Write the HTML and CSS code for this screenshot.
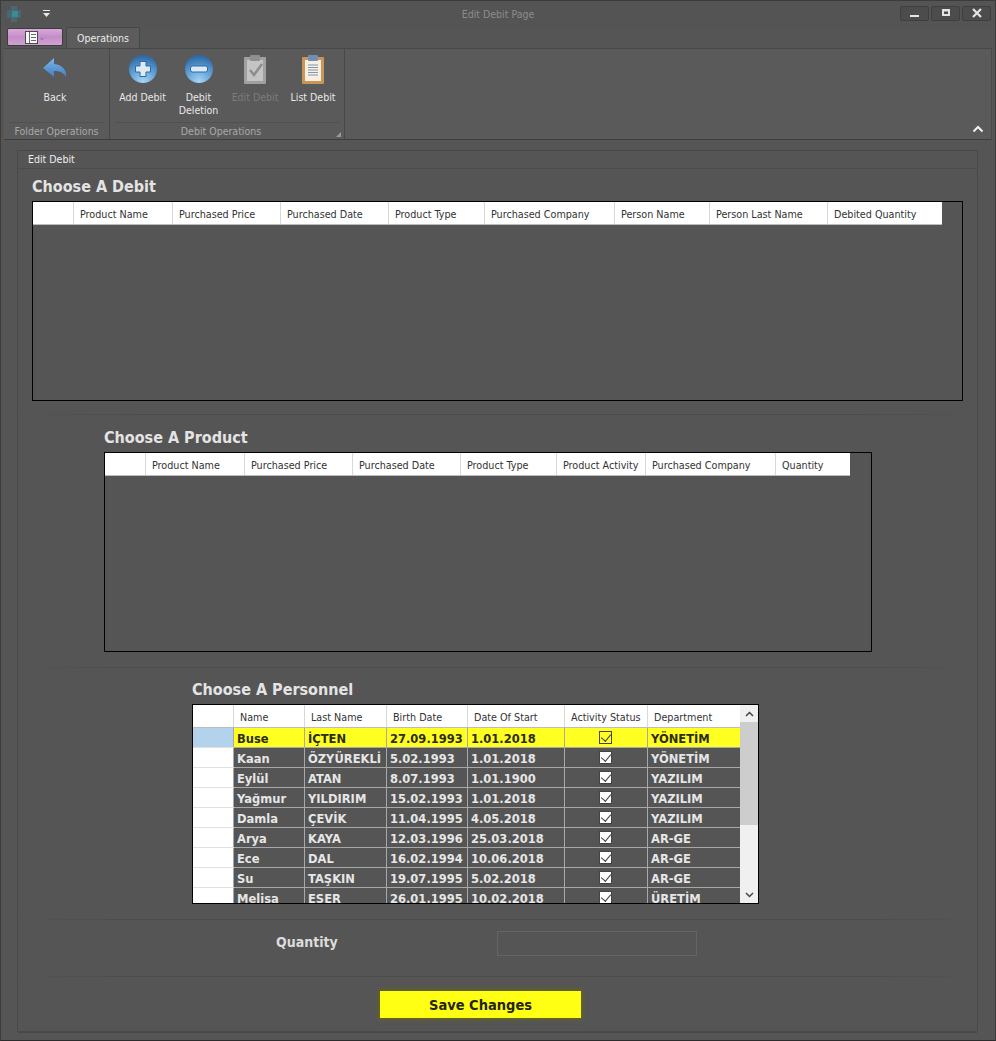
FILE: index.html
```html
<!DOCTYPE html>
<html lang="en">
<head>
    <meta charset="UTF-8">
    <title>Edit Debit Page</title>
    <link rel="stylesheet" href="styles.css">
</head>
<body>
<div class="window">

    <div class="titlebar">
        <div class="quick">
            <svg class="appicon" width="16" height="18" viewBox="0 0 16 18">
                <rect x="5" y="1" width="6" height="16" fill="#4f6670"/>
                <rect x="1" y="5" width="14" height="8" fill="#466873"/>
                <rect x="6" y="6" width="6" height="6" fill="#3a8d97"/>
            </svg>
            <svg class="qat" width="9" height="8" viewBox="0 0 9 8">
                <rect x="1" y="0" width="7" height="1" fill="#e8e8e8"/>
                <path d="M1 3h7L4.5 7z" fill="#e8e8e8"/>
            </svg>
        </div>
        <div class="wintitle">Edit Debit Page</div>
        <div class="winbtns">
            <div class="winbtn"><svg width="12" height="10" viewBox="0 0 12 10"><rect x="1" y="7" width="9" height="2" fill="#e4e4e4"/></svg></div>
            <div class="winbtn"><svg width="12" height="10" viewBox="0 0 12 10"><path d="M2 1h8v7H2z M4 3.5v2.500h4V3.500z" fill="#e4e4e4" fill-rule="evenodd"/></svg></div>
            <div class="winbtn"><svg width="12" height="10" viewBox="0 0 12 10"><path d="M2 1l8 8M10 1L2 9" stroke="#e4e4e4" stroke-width="2.2" fill="none"/></svg></div>
        </div>
    </div>

    <div class="tabstrip">
        <div class="appmenu">
            <svg width="13" height="13" viewBox="0 0 13 13">
                <rect x="0.5" y="0.5" width="12" height="12" fill="#f6f6f6" stroke="#4a4a4a"/>
                <path d="M4.5 1v11M6 3.5h5M6 6.500h5M6 9.500h5" stroke="#6a6a6a" fill="none"/>
            </svg>
            <span class="appmenu-arrow">&#8964;</span>
        </div>
        <div class="tab">Operations</div>
    </div>

    <div class="ribbon">
        <div class="rgroup group-folder">
            <div class="rbtns">
                <div class="rbtn btn-back">
                    <svg class="ricon" width="32" height="32" viewBox="0 0 32 32">
                        <defs>
                            <linearGradient id="arrowfill" x1="0" y1="0" x2="0" y2="1">
                                <stop offset="0" stop-color="#7fb6ea"/>
                                <stop offset="1" stop-color="#3f7fc4"/>
                            </linearGradient>
                        </defs>
                        <path d="M15 5L4 15l11 9v-6c5 0 9 1 12 6 1-6-3-12-12-13z" fill="url(#arrowfill)"/>
                    </svg>
                    <span>Back</span>
                </div>
            </div>
            <div class="rlabel">Folder Operations</div>
        </div>
        <div class="rgroup group-debit">
            <div class="rbtns">
                <div class="rbtn btn-add">
                    <svg class="ricon" width="32" height="32" viewBox="0 0 32 32">
                        <defs>
                            <radialGradient id="ball" cx="0.5" cy="0.95" r="0.9">
                                <stop offset="0" stop-color="#a6d6f6"/>
                                <stop offset="0.55" stop-color="#5f9fd6"/>
                                <stop offset="1" stop-color="#2f6aa6"/>
                            </radialGradient>
                        </defs>
                        <circle cx="16" cy="16" r="14" fill="url(#ball)"/>
                        <path d="M13 8.500h6v4.500h4.500v6H19v4.500h-6V19H8.500v-6H13z" fill="#dbeaf6" stroke="#2f6aa6" stroke-width="1"/>
                    </svg>
                    <span>Add Debit</span>
                </div>
                <div class="rbtn btn-del">
                    <svg class="ricon" width="32" height="32" viewBox="0 0 32 32">
                        <circle cx="16" cy="16" r="14" fill="url(#ball)"/>
                        <rect x="7.5" y="13" width="17" height="6" rx="2" fill="#dbeaf6" stroke="#2f6aa6"/>
                    </svg>
                    <span>Debit<br>Deletion</span>
                </div>
                <div class="rbtn btn-edit disabled">
                    <svg class="ricon" width="32" height="32" viewBox="0 0 32 32">
                        <rect x="5" y="4" width="22" height="27" rx="1" fill="#a0a0a0"/>
                        <rect x="8" y="7" width="16" height="21" fill="#c4c4c4"/>
                        <rect x="11" y="2" width="10" height="6" rx="1" fill="#8f8f8f"/>
                        <path d="M11 17l4 5 8-11" stroke="#8d8d8d" stroke-width="2.5" fill="none"/>
                    </svg>
                    <span>Edit Debit</span>
                </div>
                <div class="rbtn btn-list">
                    <svg class="ricon" width="32" height="32" viewBox="0 0 32 32">
                        <rect x="5" y="4" width="22" height="27" rx="1" fill="#c8965a"/>
                        <rect x="8" y="7" width="16" height="21" fill="#f6efe2"/>
                        <rect x="11" y="2" width="10" height="6" rx="1" fill="#6f8fb4"/>
                        <path d="M11 12h10M11 14.500h10M11 17h10M11 19.500h10M11 22h10" stroke="#7f97b0" fill="none"/>
                    </svg>
                    <span>List Debit</span>
                </div>
            </div>
            <div class="rlabel label-debit">Debit Operations<i class="launcher"></i></div>
        </div>
        <svg class="collapse" width="12" height="8" viewBox="0 0 12 8"><path d="M1.5 6.500L6 2l4.500 4.500" stroke="#f2f2f2" stroke-width="2" fill="none"/></svg>
    </div>

    <div class="content">
        <div class="panel">
            <div class="panel-head">Edit Debit</div>

            <section class="block block-debit">
                <h2>Choose A Debit</h2>
                <div class="gridbox">
                    <table class="grid">
                        <thead><tr>
                            <th></th><th>Product Name</th><th>Purchased Price</th><th>Purchased Date</th><th>Product Type</th><th>Purchased Company</th><th>Person Name</th><th>Person Last Name</th><th>Debited Quantity</th>
                        </tr></thead>
                    </table>
                </div>
            </section>
            <div class="sep sep1"></div>

            <section class="block block-product">
                <h2>Choose A Product</h2>
                <div class="gridbox">
                    <table class="grid">
                        <thead><tr>
                            <th></th><th>Product Name</th><th>Purchased Price</th><th>Purchased Date</th><th>Product Type</th><th>Product Activity</th><th>Purchased Company</th><th>Quantity</th>
                        </tr></thead>
                    </table>
                </div>
            </section>
            <div class="sep sep2"></div>

            <section class="block block-personnel">
                <h2>Choose A Personnel</h2>
                <div class="gridbox">
                    <table class="grid">
                        <thead><tr>
                            <th></th><th>Name</th><th>Last Name</th><th>Birth Date</th><th>Date Of Start</th><th>Activity Status</th><th>Department</th>
                        </tr></thead>
                        <tbody>
                            <tr class="current"><td></td><td>Buse</td><td>İÇTEN</td><td>27.09.1993</td><td>1.01.2018</td><td class="chk"><i class="box"></i></td><td>YÖNETİM</td></tr>
                            <tr><td></td><td>Kaan</td><td>ÖZYÜREKLİ</td><td>5.02.1993</td><td>1.01.2018</td><td class="chk"><i class="box"></i></td><td>YÖNETİM</td></tr>
                            <tr><td></td><td>Eylül</td><td>ATAN</td><td>8.07.1993</td><td>1.01.1900</td><td class="chk"><i class="box"></i></td><td>YAZILIM</td></tr>
                            <tr><td></td><td>Yağmur</td><td>YILDIRIM</td><td>15.02.1993</td><td>1.01.2018</td><td class="chk"><i class="box"></i></td><td>YAZILIM</td></tr>
                            <tr><td></td><td>Damla</td><td>ÇEVİK</td><td>11.04.1995</td><td>4.05.2018</td><td class="chk"><i class="box"></i></td><td>YAZILIM</td></tr>
                            <tr><td></td><td>Arya</td><td>KAYA</td><td>12.03.1996</td><td>25.03.2018</td><td class="chk"><i class="box"></i></td><td>AR-GE</td></tr>
                            <tr><td></td><td>Ece</td><td>DAL</td><td>16.02.1994</td><td>10.06.2018</td><td class="chk"><i class="box"></i></td><td>AR-GE</td></tr>
                            <tr><td></td><td>Su</td><td>TAŞKIN</td><td>19.07.1995</td><td>5.02.2018</td><td class="chk"><i class="box"></i></td><td>AR-GE</td></tr>
                            <tr><td></td><td>Melisa</td><td>ESER</td><td>26.01.1995</td><td>10.02.2018</td><td class="chk"><i class="box"></i></td><td>ÜRETİM</td></tr>
                        </tbody>
                    </table>
                    <div class="scrollbar">
                        <div class="sb-btn"><svg width="9" height="6" viewBox="0 0 9 6"><path d="M1 5l3.5-3.500L8 5" stroke="#444" stroke-width="1.5" fill="none"/></svg></div>
                        <div class="sb-track"><div class="sb-thumb"></div></div>
                        <div class="sb-btn"><svg width="9" height="6" viewBox="0 0 9 6"><path d="M1 1l3.5 3.500L8 1" stroke="#444" stroke-width="1.5" fill="none"/></svg></div>
                    </div>
                </div>
            </section>
            <div class="sep sep3"></div>

            <div class="qty-row">
                <label for="qty">Quantity</label>
                <input type="text" id="qty">
            </div>
            <div class="sep sep4"></div>

            <div class="save-row">
                <button type="button" class="save">Save Changes</button>
            </div>
        </div>
    </div>

</div>
</body>
</html>
```
FILE: styles.css
```css
*{box-sizing: border-box;}
html,body{
    margin: 0;
    height: 100%;
    overflow: hidden;
    background-color: #555555;
}
.window{
    width: 996px;
    height: 1041px;
    display: flex;
    flex-direction: column;
    font-family: "DejaVu Sans Condensed", "DejaVu Sans", sans-serif;
    font-stretch: condensed;
    font-size: 10.5px;
    color: #e8e8e8;
    background-color: #555555;
    border: 1px solid #3c3c3c;
    border-bottom-color: #2c2c2c;
}

/* title bar */
.titlebar{
    height: 26px;
    display: grid;
    grid-template-columns: 1fr auto 1fr;
    align-items: center;
    background-color: #545454;
    flex: none;
}
.quick{
    display: flex;
    align-items: center;
    padding-left: 5px;
    gap: 20px;
}
.wintitle{
    color: #8c8c8c;
}
.winbtns{
    display: flex;
    justify-content: flex-end;
    gap: 2px;
    padding-right: 4px;
    margin-bottom: 2px;
}
.winbtn{
    width: 29px;
    height: 15px;
    display: flex;
    align-items: center;
    justify-content: center;
    background-color: #4c4c4c;
    border: 1px solid #3f3f3f;
    border-radius: 2px;
}

/* tabs */
.tabstrip{
    height: 21px;
    display: flex;
    align-items: flex-end;
    padding-left: 6px;
    flex: none;
}
.appmenu{
    width: 56px;
    height: 18px;
    margin-bottom: 2px;
    display: flex;
    align-items: center;
    justify-content: center;
    gap: 1px;
    background: linear-gradient(#d9a9d9, #c48cc8 50%, #cfa3d2);
    border: 1px solid #3d3d3d;
    border-radius: 2px;
}
.appmenu-arrow{
    color: #8d6a90;
    font-size: 9px;
    line-height: 9px;
}
.tab{
    margin-left: 3px;
    width: 74px;
    height: 21px;
    line-height: 21px;
    text-align: center;
    background-color: #5c5c5c;
    border: 1px solid #474747;
    border-bottom: none;
    border-radius: 2px 2px 0 0;
    color: #ececec;
}

/* ribbon */
.ribbon{
    position: relative;
    height: 92px;
    margin: 0 3px;
    display: flex;
    flex: none;
    background-color: #5a5a5a;
    border-top: 1px solid #474747;
    border-bottom: 1px solid #3e3e3e;
    border-right: 1px solid #4a4a4a;
}
.rgroup{
    display: flex;
    flex-direction: column;
    border-right: 1px solid #484848;
}
.group-folder{width: 106px;}
.group-debit{width: 235px;}
.rbtns{
    height: 73px;
    flex: none;
    display: flex;
    padding-top: 4px;
}
.rbtn{
    display: flex;
    flex-direction: column;
    align-items: center;
    text-align: center;
    line-height: 13px;
    color: #e8e8e8;
}
.ricon{
    margin-bottom: 6px;
    flex: none;
}
.btn-back{width: 102px;}
.btn-add{width: 65px;}
.btn-del{width: 47px;}
.btn-edit{width: 66px;}
.btn-list{width: 50px;}
.disabled{color: #7c7c7c;}
.rlabel{
    position: relative;
    flex: 1;
    margin: 0 5px;
    text-align: center;
    line-height: 16px;
    color: #a9a9a9;
    border-top: 1px solid #505050;
}
.label-debit{padding-right: 12px;}
.launcher{
    position: absolute;
    right: -2px;
    bottom: 2px;
    width: 0;
    height: 0;
    border-left: 5px solid transparent;
    border-bottom: 5px solid #9a9a9a;
}
.collapse{
    position: absolute;
    right: 7px;
    bottom: 6px;
}

/* main panel */
.content{
    flex: 1;
    padding: 10px 17px 7px 16px;
    min-height: 0;
}
.panel{
    height: 100%;
    display: flex;
    flex-direction: column;
    border: 1px solid #484848;
    border-radius: 2px;
    background-color: #555555;
}
.panel-head{
    height: 18px;
    line-height: 17px;
    padding-left: 10px;
    color: #eeeeee;
    border-bottom: 1px solid #4c4c4c;
    flex: none;
}
.block{
    flex: none;
}
.block h2{
    margin: 0;
    height: 23px;
    line-height: 24px;
    font-size: 16px;
    font-weight: bold;
    color: #e4e4e4;
}
.block-debit{margin: 6px 14px 0 14px;}
.block-debit .gridbox{width: 931px;}
.block-product{margin: 11px 0 0 86px;}
.block-product .gridbox{width: 768px;}
.block-personnel{margin: 10px 0 0 174px;}
.block-personnel .gridbox{width: 567px; height: 200px;}

.gridbox{
    position: relative;
    height: 200px;
    margin-top: 3px;
    border: 1px solid #000000;
    background-color: #555555;
    overflow: hidden;
}
.grid{
    border-collapse: collapse;
    table-layout: fixed;
    width: auto;
}
.grid th{
    height: 22px;
    padding: 3px 0 0 6.5px;
    background-color: #ffffff;
    border-right: 1px solid #d8d8d8;
    border-bottom: 1px solid #bcbcbc;
    font-size: 10.7px;
    font-weight: normal;
    text-align: left;
    color: #333333;
    white-space: nowrap;
    overflow: hidden;
}
.grid th:last-child{border-right: none;}

/* column widths */
.block-debit .grid{width: 909px;}
.block-debit th:nth-child(1){width: 40px;}
.block-debit th:nth-child(2){width: 99px;}
.block-debit th:nth-child(3){width: 108px;}
.block-debit th:nth-child(4){width: 108px;}
.block-debit th:nth-child(5){width: 96px;}
.block-debit th:nth-child(6){width: 130px;}
.block-debit th:nth-child(7){width: 95px;}
.block-debit th:nth-child(8){width: 118px;}
.block-debit th:nth-child(9){width: 115px;}

.block-product .grid{width: 745px;}
.block-product th:nth-child(1){width: 40px;}
.block-product th:nth-child(2){width: 99px;}
.block-product th:nth-child(3){width: 108px;}
.block-product th:nth-child(4){width: 108px;}
.block-product th:nth-child(5){width: 96px;}
.block-product th:nth-child(6){width: 89px;}
.block-product th:nth-child(7){width: 130px;}
.block-product th:nth-child(8){width: 75px;}

.block-personnel .grid{width: 547px;}
.block-personnel th:nth-child(1){width: 40px;}
.block-personnel th:nth-child(2){width: 71px;}
.block-personnel th:nth-child(3){width: 82px;}
.block-personnel th:nth-child(4){width: 81px;}
.block-personnel th:nth-child(5){width: 97px;}
.block-personnel th:nth-child(6){width: 83px;}
.block-personnel th:nth-child(7){width: 93px;}

.grid td{
    height: 20px;
    padding: 3px 0 0 3.5px;
    background-color: #555555;
    border-right: 1px solid #a8a8a8;
    border-bottom: 1px solid #a8a8a8;
    font-family: "DejaVu Sans", sans-serif;
    font-stretch: normal;
    font-size: 11.5px;
    font-weight: bold;
    color: #e6e6e6;
    white-space: nowrap;
    overflow: hidden;
}
.grid td:first-child{
    background-color: #ffffff;
    border-right: 1px solid #a8a8a8;
    border-bottom: 1px solid #e0e0e0;
}
.grid .current td{
    background-color: #ffff22;
    color: #2c2c10;
}
.grid .current td:first-child{background-color: #b3d3ec;}
.grid td.chk{
    padding: 0;
    text-align: center;
}
.box{
    display: inline-block;
    position: relative;
    width: 13px;
    height: 13px;
    vertical-align: middle;
    background-color: #ffffff;
    border: 1px solid #444444;
}
.box::after{
    content: "";
    position: absolute;
    left: 3px;
    top: 0;
    width: 5px;
    height: 8px;
    border-right: 1px solid #444444;
    border-bottom: 1px solid #444444;
    transform: rotate(40deg);
}
.current .box{background-color: #ffff22;}

/* scrollbar on the personnel grid */
.scrollbar{
    position: absolute;
    top: 0;
    right: 0;
    bottom: 0;
    width: 18px;
    display: flex;
    flex-direction: column;
    background-color: #f0f0f0;
}
.sb-btn{
    height: 17px;
    flex: none;
    display: flex;
    align-items: center;
    justify-content: center;
}
.sb-track{flex: 1;}
.sb-thumb{
    height: 103px;
    background-color: #cdcdcd;
}

.sep{
    height: 1px;
    flex: none;
    background: linear-gradient(to right, #555555, #4c4c4c 12%, #4c4c4c 88%, #555555);
}
.sep1{margin-top: 13px;}
.sep2{margin-top: 15px;}
.sep3{margin-top: 15px;}

.qty-row{
    height: 56px;
    display: flex;
    align-items: flex-start;
    padding: 11px 0 0 258px;
    flex: none;
}
.qty-row label{
    width: 221px;
    line-height: 23px;
    font-size: 14px;
    font-weight: bold;
    color: #dcdcdc;
}
.qty-row input{
    width: 200px;
    height: 25px;
    background-color: #555555;
    border: 1px solid #646464;
    outline: none;
}
.save-row{
    flex: 1;
    padding: 14px 0 0 362px;
    border-bottom: 1px solid #4a4a4a;
}
.save{
    width: 201px;
    height: 27px;
    padding: 0;
    background-color: #ffff14;
    border: none;
    box-shadow: 0 0 4px 1px #6a6a10;
    font-family: inherit;
    font-stretch: condensed;
    font-size: 14.5px;
    font-weight: bold;
    color: #242410;
}
```
